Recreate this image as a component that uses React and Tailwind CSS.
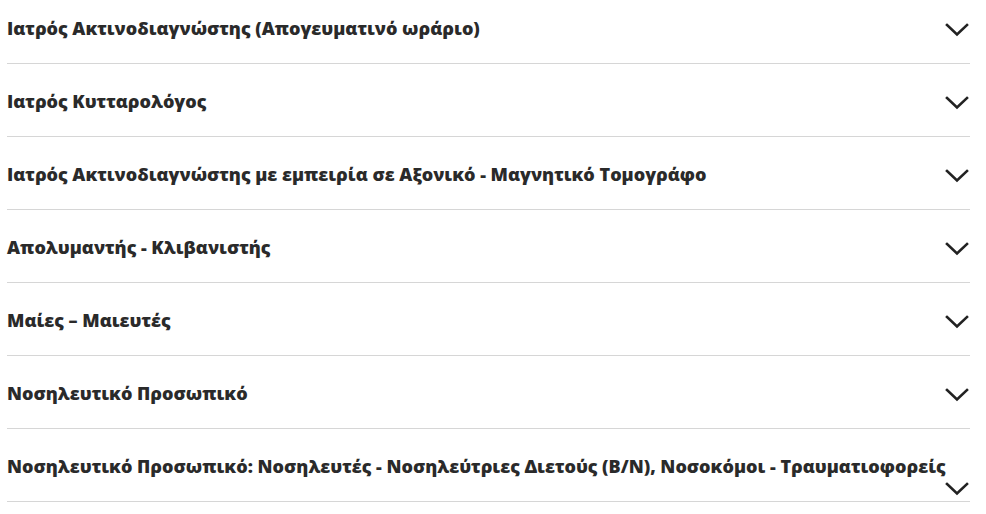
import React from 'react';

const positions = [
  'Ιατρός Ακτινοδιαγνώστης (Απογευματινό ωράριο)',
  'Ιατρός Κυτταρολόγος',
  'Ιατρός Ακτινοδιαγνώστης με εμπειρία σε Αξονικό - Μαγνητικό Τομογράφο',
  'Απολυμαντής - Κλιβανιστής',
  'Μαίες – Μαιευτές',
  'Νοσηλευτικό Προσωπικό',
  'Νοσηλευτικό Προσωπικό: Νοσηλευτές - Νοσηλεύτριες Διετούς (Β/Ν), Νοσοκόμοι - Τραυματιοφορείς',
];

const Chevron = () => (
  <svg width="24" height="14" viewBox="0 0 24 14" fill="none" className="shrink-0">
    <path d="M2 2 L12 11.5 L22 2" stroke="#222" strokeWidth="2.6" strokeLinecap="square" />
  </svg>
);

export default function App() {
  return (
    <div className="w-[986px] h-[514px] overflow-hidden bg-white" style={{ fontFamily: '"Open Sans", "Noto Sans", sans-serif' }}>
      <div className="ml-[7px] w-[963px] -mt-[9px]">
        {positions.map((title, i) => {
          const last = i === positions.length - 1;
          return (
            <div key={i} className="relative h-[73px] border-b border-[#d6d6d6] pt-[26px]">
              <div className="flex items-start justify-between">
                <h3 className="text-[18px] leading-[22px] font-extrabold text-[#2a2a2a]">{title}</h3>
                {!last && (
                  <div className="mt-[6px] mr-[1px]">
                    <Chevron />
                  </div>
                )}
              </div>
              {last && (
                <div className="flex justify-end mt-[5px] mr-[1px]">
                  <Chevron />
                </div>
              )}
            </div>
          );
        })}
      </div>
    </div>
  );
}
